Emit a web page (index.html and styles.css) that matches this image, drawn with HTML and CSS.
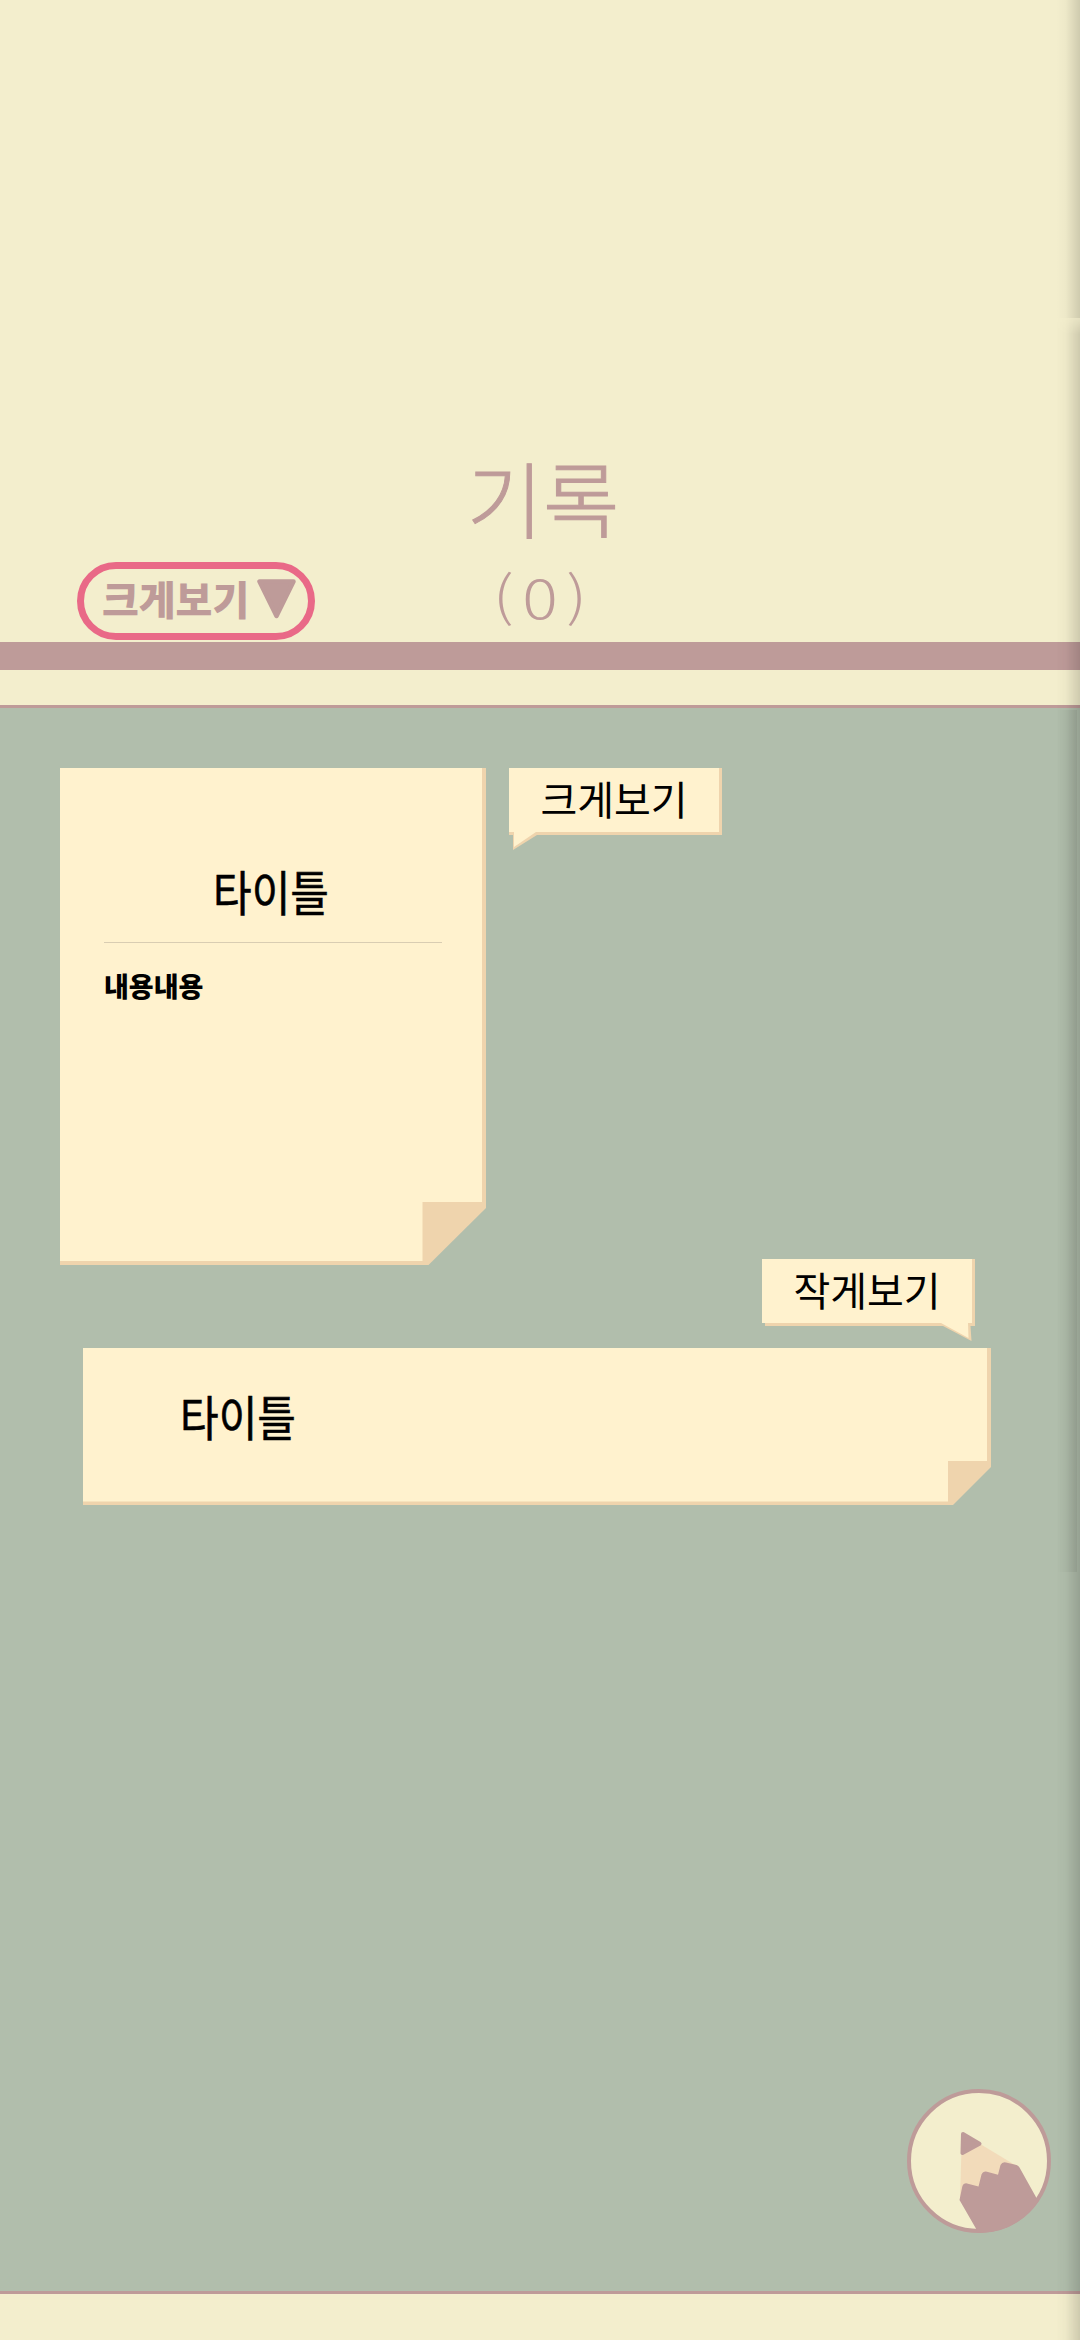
FILE: index.html
```html
<!DOCTYPE html>
<html lang="ko">
<head>
<meta charset="utf-8">
<title>기록</title>
<link rel="stylesheet" href="styles.css">
</head>
<body>
<div class="screen">
  <header class="header">
    <h1 class="title">기록</h1>
    <div class="toolbar">
      <button class="view-toggle"><span class="view-label">크게보기</span><svg class="caret" viewBox="0 0 39 40"><path d="M2.500 2.500H36.500L19.500 37Z" fill="#be9b99" stroke="#be9b99" stroke-width="4.500" stroke-linejoin="round"/></svg></button>
      <p class="count">(0)</p>
    </div>
  </header>
  <div class="band"></div>
  <main class="board">
    <section class="large-row">
      <article class="note note-large">
        <svg class="paper" viewBox="0 0 426 497"><path d="M0 0H426V440L368.500 497H0Z" fill="#efd4ad"/><path d="M0 0H422V434H362.500V493H0Z" fill="#fff2ce"/></svg>
        <h2 class="note-title"><span class="note-name">타이틀</span></h2>
        <p class="note-body">내용내용</p>
      </article>
      <div class="bubble">
        <svg class="paper" viewBox="0 0 213 83"><path d="M210 0H213V67H28L4 82V67H0V3Z" fill="#efd4ad"/><path d="M0 0H210V64H27L5 79V64H0Z" fill="#fff2ce"/></svg>
        <span class="bubble-text">크게보기</span>
      </div>
    </section>
    <div class="bubble bubble-right">
      <svg class="paper" viewBox="0 0 213 83"><path d="M3 3L210 0H213V67H208.500L209.500 82L181 67H3Z" fill="#efd4ad"/><path d="M0 0H210V64H206L206.500 79L179 64H0Z" fill="#fff2ce"/></svg>
      <span class="bubble-text">작게보기</span>
    </div>
    <article class="note note-small">
      <svg class="paper" viewBox="0 0 908 157"><path d="M0 0H908V119L870 157H0Z" fill="#efd4ad"/><path d="M0 0H904V113H865V153.500H0Z" fill="#fff2ce"/></svg>
      <h2 class="note-title"><span class="note-name">타이틀</span></h2>
    </article>
    <button class="write" aria-label="쓰기">
      <svg viewBox="0 0 144 144">
        <defs><clipPath id="disc"><circle cx="72" cy="72" r="72"/></clipPath></defs>
        <circle cx="72" cy="72" r="70" fill="#f3eecd" stroke="#be9b99" stroke-width="4"/>
        <path d="M54.500 60L74 55.500L108 76L90 110L53 110Z" fill="#f2dbba"/>
        <path d="M56 45L72.500 54.700L55.500 64Z" fill="#be9b99" stroke="#be9b99" stroke-width="4" stroke-linejoin="round"/>
        <g clip-path="url(#disc)"><path d="M52.500 111L55.300 97.500Q56.500 94 60 94.400L71.500 97.500L74.500 85.500Q76 82 80 82.700L91 85.800L93.500 76Q95 72.800 99 73.500L109.500 76Q111.500 76.500 112.500 78.500L129.500 109L140 125L90 150H72L69.500 140.500Z" fill="#be9b99"/></g>
      </svg>
    </button>
  </main>
  <footer class="footer"></footer>
  <div class="edge-shade"><i class="shade shade-top"></i><i class="shade shade-rest"></i></div>
  <div class="board-shade"></div>
</div>
</body>
</html>
```

FILE: styles.css
```css
* { box-sizing: border-box; }
body { margin: 0; font-family: "Noto Sans CJK KR", sans-serif; }
h1, h2, p { margin: 0; font-weight: 400; }
button { border: 0; padding: 0; background: none; font-family: inherit; }
.screen { position: relative; width: 1080px; height: 2340px; overflow: hidden; display: flex; flex-direction: column; background: #f3eecd; color: #000; }
.header { height: 642px; padding-top: 440px; color: #be9b99; }
.title { height: 122px; text-align: center; font-size: 83px; line-height: 122px; font-weight: 300; transform: translate(3px, -5px); -webkit-text-stroke: 1px #be9b99; }
.toolbar { display: grid; grid-template-columns: 77px 238px 1fr 315px; height: 78px; }
.view-toggle { grid-column: 2; display: flex; align-items: center; gap: 8px; padding: 0 12px 0 18px; border: 7px solid #e96987; border-radius: 39px; color: #be9b99; }
.view-label { flex: 0 0 147px; font-size: 40px; font-weight: 900; line-height: 64px; text-align: left; white-space: nowrap; transform: translateY(-3px); }
.caret { width: 39px; height: 40px; flex: none; position: relative; top: -2px; }
.count { grid-column: 3; text-align: center; font-size: 54px; font-weight: 300; line-height: 72px; letter-spacing: 7px; text-indent: 7px; transform: translateY(-2px) scaleX(1.23); }
.band { height: 66px; border-top: 28.5px solid #be9b99; border-bottom: 3px solid #be9b99; }
.board { position: relative; height: 1583px; padding-top: 60px; background: #b1beac; }
.large-row { display: flex; align-items: flex-start; gap: 23px; padding-left: 60px; height: 491px; }
.note { position: relative; }
.note-large { width: 426px; height: 497px; padding: 80px 44px 0; }
.paper { position: absolute; inset: 0; width: 100%; height: 100%; }
.note-title { position: relative; font-size: 42px; line-height: 86px; text-align: center; }
.note-name { display: inline-block; transform: translateX(-1px) scaleY(1.14); -webkit-text-stroke: .5px #000; }
.note-large .note-title { height: 95px; padding-right: 2px; border-bottom: 1px solid #d9cdb2; line-height: 84px; }
.note-body { position: relative; padding-top: 10px; font-size: 27px; line-height: 66px; font-weight: 900; }
.bubble { position: relative; width: 213px; height: 83px; }
.bubble-text { position: relative; display: block; width: 210px; text-align: center; font-size: 40px; line-height: 61px; }
.bubble-right { margin-left: 762px; height: 83px; }
.note-small { width: 908px; height: 157px; margin: 6px 0 0 83px; padding: 24px 0 0 98px; }
.note-small .note-title { text-align: left; }
.write { position: absolute; left: 907px; top: 1381px; width: 144px; height: 144px; }
.write svg { display: block; }
.footer { height: 49px; border-top: 3px solid #be9b99; }
.edge-shade { position: absolute; top: 0; right: 0; width: 24px; height: 100%; pointer-events: none; display: flex; flex-direction: column; }
.shade { display: block; background: linear-gradient(90deg, transparent, rgba(0,0,0,.025) 40%, rgba(0,0,0,.15)); }
.shade-top { height: 318px; }
.shade-rest { flex: 1; -webkit-mask-image: linear-gradient(rgba(0,0,0,.35), #000 16px); mask-image: linear-gradient(rgba(0,0,0,.35), #000 16px); }
.board-shade { position: absolute; left: 1057px; top: 710px; width: 20px; height: 862px; pointer-events: none; background: linear-gradient(90deg, transparent, rgba(0,0,0,.06)); }
```
